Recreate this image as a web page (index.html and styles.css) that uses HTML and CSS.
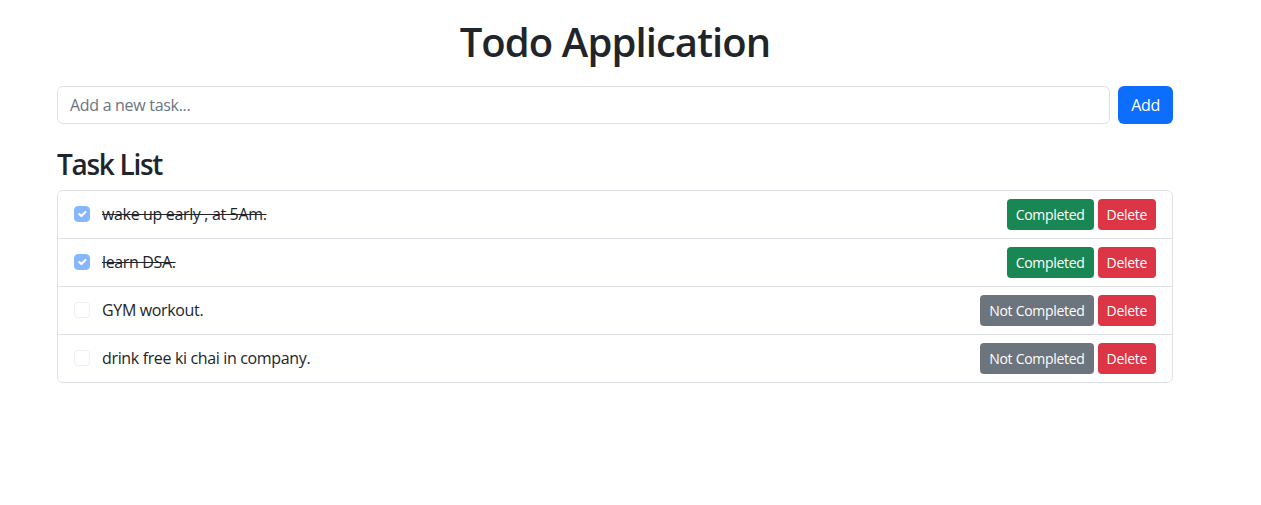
FILE: index.html
```html
<!DOCTYPE html>
<html lang="en">
<head>
<meta charset="utf-8">
<title>Todo Application</title>
<link rel="stylesheet" href="styles.css">
</head>
<body>
<div class="container">
  <h1 class="title">Todo Application</h1>
  <div class="input-group">
    <input class="task-input" type="text" placeholder="Add a new task...">
    <button class="btn btn-primary">Add</button>
  </div>
  <h3 class="list-title">Task List</h3>
  <ul class="list-group">
    <li class="list-item">
      <div class="item-left">
        <span class="check checked"><svg viewBox="0 0 20 20" width="16" height="16"><path d="M6 10l3 3l6-6" fill="none" stroke="#fff" stroke-width="3" stroke-linecap="round" stroke-linejoin="round"/></svg></span>
        <span class="item-text done">wake up early , at 5Am.</span>
      </div>
      <div class="item-actions">
        <button class="btn btn-sm btn-success">Completed</button>
        <button class="btn btn-sm btn-danger">Delete</button>
      </div>
    </li>
    <li class="list-item">
      <div class="item-left">
        <span class="check checked"><svg viewBox="0 0 20 20" width="16" height="16"><path d="M6 10l3 3l6-6" fill="none" stroke="#fff" stroke-width="3" stroke-linecap="round" stroke-linejoin="round"/></svg></span>
        <span class="item-text done">learn DSA.</span>
      </div>
      <div class="item-actions">
        <button class="btn btn-sm btn-success">Completed</button>
        <button class="btn btn-sm btn-danger">Delete</button>
      </div>
    </li>
    <li class="list-item">
      <div class="item-left">
        <span class="check"></span>
        <span class="item-text">GYM workout.</span>
      </div>
      <div class="item-actions">
        <button class="btn btn-sm btn-secondary">Not Completed</button>
        <button class="btn btn-sm btn-danger">Delete</button>
      </div>
    </li>
    <li class="list-item">
      <div class="item-left">
        <span class="check"></span>
        <span class="item-text">drink free ki chai in company.</span>
      </div>
      <div class="item-actions">
        <button class="btn btn-sm btn-secondary">Not Completed</button>
        <button class="btn btn-sm btn-danger">Delete</button>
      </div>
    </li>
  </ul>
</div>
</body>
</html>
```

FILE: styles.css
```css
* { box-sizing: border-box; }
html, body { margin: 0; padding: 0; background: #fff; }
body {
  font-family: "Open Sans", "Noto Sans", "Liberation Sans", sans-serif;
  font-size: 16px;
  line-height: 1.5;
  color: #212529;
}
.container {
  width: 1116px;
  margin-left: 57px;
  padding-top: 18px;
}
.title {
  margin: 0 0 20px;
  font-size: 40px;
  font-weight: 600;
  line-height: 48px;
  letter-spacing: -0.9px;
  text-align: center;
}
.input-group {
  display: flex;
  gap: 8px;
  margin-bottom: 24px;
}
.task-input {
  flex: 1;
  height: 38px;
  padding: 6px 12px;
  font: inherit;
  letter-spacing: -0.3px;
  color: #212529;
  border: 1px solid #dee2e6;
  border-radius: 6px;
  outline: none;
}
.task-input::placeholder { color: #6c757d; }
.btn {
  font-family: inherit;
  border: 1px solid transparent;
  color: #fff;
  border-radius: 6px;
  cursor: pointer;
}
.btn-primary {
  background: #0d6efd;
  height: 38px;
  padding: 0 12px;
  font-size: 16px;
  font-weight: 500;
  letter-spacing: -0.3px;
}
.list-title {
  margin: 0 0 8px;
  font-size: 28px;
  font-weight: 600;
  line-height: 33.6px;
  letter-spacing: -1.3px;
}
.list-group {
  list-style: none;
  margin: 0;
  padding: 0;
  border: 1px solid #dee2e6;
  border-radius: 6px;
}
.list-item {
  display: flex;
  align-items: center;
  justify-content: space-between;
  padding: 8px 16px;
  border-bottom: 1px solid #dee2e6;
}
.list-item:last-child { border-bottom: 0; }
.item-left {
  display: flex;
  align-items: center;
  gap: 12px;
}
.check {
  width: 16px;
  height: 16px;
  border: 1px solid #eceef1;
  border-radius: 4px;
  display: flex;
  align-items: center;
  justify-content: center;
}
.check.checked {
  background: #86b7fe;
  border-color: #86b7fe;
}
.check svg { display: block; }
.item-text { letter-spacing: -0.35px; }
.item-text.done { text-decoration: line-through; }
.item-actions {
  display: flex;
  gap: 4px;
}
.btn-sm {
  height: 31px;
  padding: 0 8px;
  font-size: 14px;
  font-weight: 500;
  letter-spacing: -0.3px;
  border-radius: 4px;
}
.btn-success { background: #198754; }
.btn-danger { background: #dc3545; }
.btn-secondary { background: #6c757d; }
```
